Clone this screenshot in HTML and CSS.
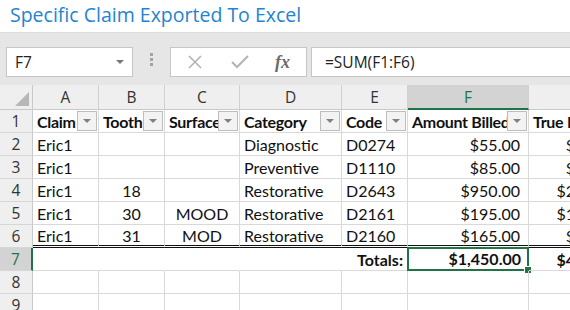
FILE: index.html
```html
<!DOCTYPE html>
<html lang="en">
<head>
    <meta charset="UTF-8">
    <title>Specific Claim Exported To Excel</title>
    <link rel="stylesheet" href="styles.css">
</head>
<body>
<h1 class="title">Specific Claim Exported To Excel</h1>

<div class="toolbar">
    <div class="name-box">
        <span>F7</span>
        <span class="caret"></span>
    </div>
    <div class="grip"><i></i><i></i><i></i></div>
    <div class="fx-box">
        <svg width="16" height="14" viewBox="0 0 16 14"><path d="M2 1 L14 13 M14 1 L2 13" stroke="#b3b3b3" stroke-width="1.6" fill="none"/></svg>
        <svg width="18" height="14" viewBox="0 0 18 14"><path d="M1 7 L6 12 L17 1" stroke="#b3b3b3" stroke-width="2" fill="none"/></svg>
        <span class="fx">fx</span>
    </div>
    <div class="formula">=SUM(F1:F6)</div>
</div>

<div class="sheet">
    <div class="corner"><span class="tri"></span></div>
    <div class="col-head">A</div>
    <div class="col-head">B</div>
    <div class="col-head">C</div>
    <div class="col-head">D</div>
    <div class="col-head">E</div>
    <div class="col-head sel">F</div>
    <div class="col-head">G</div>

    <div class="row-head">1</div>
    <div class="cell hd">Claim<span class="filter"></span></div>
    <div class="cell hd">Tooth<span class="filter"></span></div>
    <div class="cell hd">Surface<span class="filter"></span></div>
    <div class="cell hd">Category<span class="filter"></span></div>
    <div class="cell hd">Code<span class="filter"></span></div>
    <div class="cell hd">Amount Billed<span class="filter"></span></div>
    <div class="cell hd">True Fee<span class="filter"></span></div>

    <div class="row-head">2</div>
    <div class="cell">Eric1</div>
    <div class="cell"></div>
    <div class="cell"></div>
    <div class="cell">Diagnostic</div>
    <div class="cell">D0274</div>
    <div class="cell num">$55.00</div>
    <div class="cell num">$41.25</div>

    <div class="row-head">3</div>
    <div class="cell">Eric1</div>
    <div class="cell"></div>
    <div class="cell"></div>
    <div class="cell">Preventive</div>
    <div class="cell">D1110</div>
    <div class="cell num">$85.00</div>
    <div class="cell num">$63.75</div>

    <div class="row-head">4</div>
    <div class="cell">Eric1</div>
    <div class="cell mid">18</div>
    <div class="cell"></div>
    <div class="cell">Restorative</div>
    <div class="cell">D2643</div>
    <div class="cell num">$950.00</div>
    <div class="cell num">$212.50</div>

    <div class="row-head">5</div>
    <div class="cell">Eric1</div>
    <div class="cell mid">30</div>
    <div class="cell mid">MOOD</div>
    <div class="cell">Restorative</div>
    <div class="cell">D2161</div>
    <div class="cell num">$195.00</div>
    <div class="cell num">$105.00</div>

    <div class="row-head">6</div>
    <div class="cell last">Eric1</div>
    <div class="cell last mid">31</div>
    <div class="cell last mid">MOD</div>
    <div class="cell last">Restorative</div>
    <div class="cell last">D2160</div>
    <div class="cell last num">$165.00</div>
    <div class="cell last num">$45.00</div>

    <div class="row-head sel">7</div>
    <div class="cell open"></div>
    <div class="cell open"></div>
    <div class="cell open"></div>
    <div class="cell open"></div>
    <div class="cell open total">Totals:</div>
    <div class="cell num total active">$1,450.00</div>
    <div class="cell num total">$467.50</div>

    <div class="row-head">8</div>
    <div class="cell"></div>
    <div class="cell"></div>
    <div class="cell"></div>
    <div class="cell"></div>
    <div class="cell"></div>
    <div class="cell"></div>
    <div class="cell"></div>

    <div class="row-head">9</div>
    <div class="cell"></div>
    <div class="cell"></div>
    <div class="cell"></div>
    <div class="cell"></div>
    <div class="cell"></div>
    <div class="cell"></div>
    <div class="cell"></div>
</div>
</body>
</html>
```

FILE: styles.css
```css
body {
    margin: 0;
    width: 570px;
    height: 310px;
    overflow: hidden;
    background: #fff;
    font-family: "Open Sans", sans-serif;
}

.title {
    margin: 0;
    height: 32px;
    padding-left: 10px;
    font-size: 19.5px;
    font-weight: normal;
    line-height: 30px;
    color: #1f84d3;
}

/* formula bar */
.toolbar {
    display: flex;
    align-items: flex-start;
    height: 53px;
    padding: 14px 0 0 6px;
    box-sizing: border-box;
    background: #e6e6e6;
    border-top: 1px solid #dcdcdc;
}

.name-box {
    display: flex;
    align-items: center;
    justify-content: space-between;
    width: 127px;
    height: 30px;
    padding: 0 8px 0 8px;
    box-sizing: border-box;
    background: #fff;
    border: 1px solid #c6c6c6;
    font-size: 15.5px;
    color: #222;
}

.caret {
    width: 0;
    height: 0;
    border-left: 4px solid transparent;
    border-right: 4px solid transparent;
    border-top: 4px solid #777;
}

.grip {
    display: flex;
    flex-direction: column;
    align-items: center;
    gap: 2px;
    width: 37px;
    padding-top: 6px;
}

.grip i {
    width: 3px;
    height: 3px;
    background: #a3a3a3;
}

.fx-box {
    display: flex;
    align-items: center;
    width: 137px;
    height: 30px;
    box-sizing: border-box;
    padding-left: 16px;
    background: #fff;
    border: 1px solid #c6c6c6;
}

.fx-box svg:nth-child(2) {
    margin-left: 28px;
}

.fx {
    margin-left: 26px;
    font-family: "Liberation Serif", serif;
    font-style: italic;
    font-weight: bold;
    font-size: 18px;
    color: #6b6b6b;
}

.formula {
    flex: 1;
    height: 30px;
    margin-left: 4px;
    padding-left: 13px;
    box-sizing: border-box;
    background: #fff;
    border: 1px solid #c6c6c6;
    border-right: none;
    font-size: 15.5px;
    line-height: 28px;
    color: #222;
}

/* grid */
.sheet {
    display: grid;
    grid-template-columns: 33px 66px 66px 75px 102px 66px 121px 96px;
    grid-template-rows: 25px;
    grid-auto-rows: 23px;
    width: 625px;
}

.corner,
.col-head,
.row-head {
    background: #efefef;
    box-sizing: border-box;
    color: #333;
    font-size: 15.5px;
}

.corner {
    display: flex;
    align-items: flex-end;
    justify-content: flex-end;
    padding: 0 3px 3px 0;
    border-right: 1px solid #c9c9c9;
    border-bottom: 1px solid #c9c9c9;
}

.tri {
    width: 0;
    height: 0;
    border-left: 14px solid transparent;
    border-bottom: 14px solid #b7b7b7;
}

.col-head {
    text-align: center;
    line-height: 24px;
    border-right: 1px solid #d0d0d0;
    border-bottom: 1px solid #c9c9c9;
}

.row-head {
    text-align: center;
    line-height: 22px;
    border-right: 1px solid #c9c9c9;
    border-bottom: 1px solid #d6d6d6;
}

.col-head.sel {
    background: #d3d3d3;
    color: #217346;
    border-bottom: 2px solid #217346;
}

.row-head.sel {
    background: #d3d3d3;
    color: #217346;
    border-right: 2px solid #217346;
}

.cell {
    position: relative;
    padding: 0 4px;
    box-sizing: border-box;
    overflow: hidden;
    white-space: nowrap;
    border-right: 1px solid #d9d9d9;
    border-bottom: 1px solid #d9d9d9;
    font-family: "Lato", sans-serif;
    font-size: 16px;
    line-height: 23px;
    color: #111;
}

.cell.hd {
    font-weight: bold;
    letter-spacing: -0.3px;
}

.cell.num {
    text-align: right;
    padding-right: 8px;
}

.cell.mid {
    text-align: center;
}

.cell.last {
    border-bottom: 3px double #111;
    line-height: 21px;
}

.cell.open {
    border-right-color: transparent;
}

.cell.total {
    font-weight: bold;
    text-align: right;
}

.cell.active {
    overflow: visible;
    border: 2px solid #217346;
    margin: -1px 0 0 -1px;
    width: calc(100% + 1px);
    height: calc(100% + 1px);
    line-height: 20px;
    padding-right: 6px;
}

.cell.active::after {
    content: "";
    position: absolute;
    right: -5px;
    bottom: -5px;
    width: 6px;
    height: 6px;
    background: #217346;
    border: 1px solid #fff;
}

.filter {
    position: absolute;
    top: 1px;
    right: 1px;
    display: flex;
    align-items: center;
    justify-content: center;
    width: 20px;
    height: 20px;
    box-sizing: border-box;
    background: #f3f3f3;
    border: 1px solid #bdbdbd;
}

.filter::before {
    content: "";
    border-left: 4px solid transparent;
    border-right: 4px solid transparent;
    border-top: 4px solid #808080;
}
```
